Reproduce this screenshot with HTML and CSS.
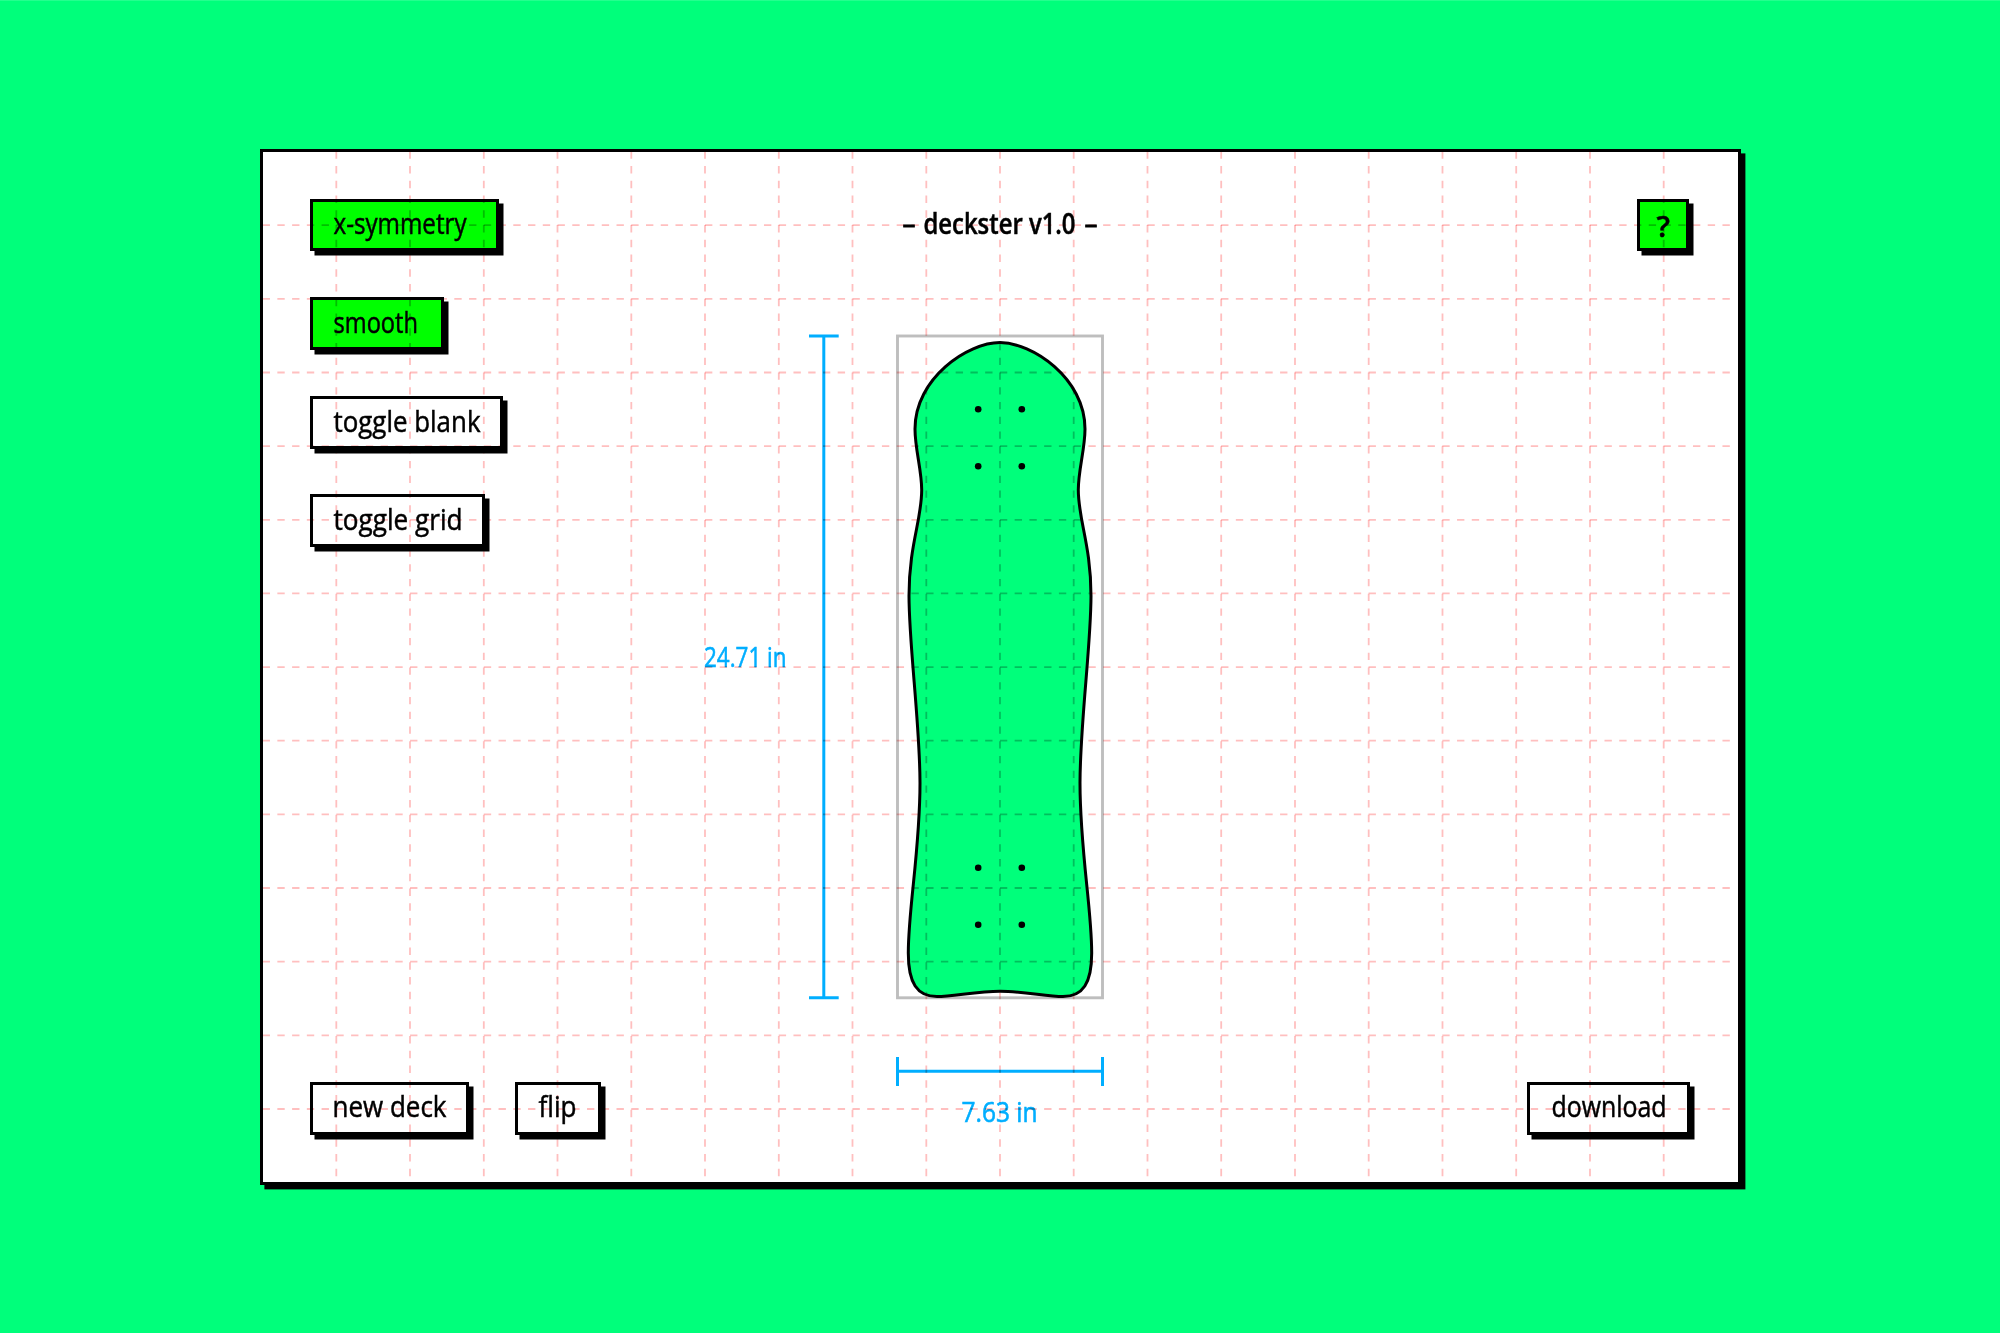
FILE: index.html
```html
<!DOCTYPE html>
<html lang="en">
<head>
<meta charset="utf-8">
<title>deckster</title>
<link rel="stylesheet" href="styles.css">
</head>
<body>
<main class="panel">
  <svg class="stage" viewBox="263 152 1475 1030">
    <rect class="bounds" x="897.5" y="336" width="205" height="661.8"/>
    <path class="deck" d="M1000 342.6 C968 342.6 915 378 915 429 C915 449 921.7 470 921.7 490 C921.7 520 909 545 909 596 C909 645 920 725 920 783 C920 850 908.3 908 908.3 953 C908.3 983 917 996.5 937 996.5 C953 996.5 977 991.2 1000 991.2 C1023 991.2 1047 996.5 1063 996.5 C1083 996.5 1091.7 983 1091.7 953 C1091.7 908 1080 850 1080 783 C1080 725 1091 645 1091 596 C1091 545 1078.3 520 1078.3 490 C1078.3 470 1085 449 1085 429 C1085 378 1032 342.6 1000 342.6 Z"/>
    <g class="bolts">
      <circle cx="978.2" cy="409.2" r="3.3"/><circle cx="1021.8" cy="409.2" r="3.3"/>
      <circle cx="978.2" cy="466.2" r="3.3"/><circle cx="1021.8" cy="466.2" r="3.3"/>
      <circle cx="978.2" cy="867.8" r="3.3"/><circle cx="1021.8" cy="867.8" r="3.3"/>
      <circle cx="978.2" cy="924.7" r="3.3"/><circle cx="1021.8" cy="924.7" r="3.3"/>
    </g>
    <path class="ruler" d="M809 336H838.7M823.8 336V997.8M809 997.8H838.7M897.5 1057V1086M897.5 1071.2H1102.5M1102.5 1057V1086"/>
    <text class="measure" x="704" y="666.5" textLength="82.5" lengthAdjust="spacingAndGlyphs">24.71 in</text>
    <text class="measure" x="961.5" y="1122.3" textLength="76" lengthAdjust="spacingAndGlyphs">7.63 in</text>
  </svg>

  <header class="top">
    <button class="btn on w-sym"><svg class="label"><text x="20.5" y="32" textLength="133" lengthAdjust="spacingAndGlyphs">x-symmetry</text></svg></button>
    <h1 class="title"><svg class="label">
      <text class="dash" x="-0.5" y="31.5" textLength="13" lengthAdjust="spacingAndGlyphs">–</text>
      <text class="bold" x="20.5" y="31.5" textLength="152" lengthAdjust="spacingAndGlyphs">deckster v1.0</text>
      <text class="dash" x="181.5" y="31.5" textLength="13" lengthAdjust="spacingAndGlyphs">–</text>
    </svg></h1>
    <button class="btn on w-help"><svg class="label"><text class="bold" x="16.5" y="35" textLength="13.5" lengthAdjust="spacingAndGlyphs">?</text></svg></button>
  </header>

  <nav class="tools">
    <button class="btn on w-smooth"><svg class="label"><text x="20.5" y="32.6" textLength="84.5" lengthAdjust="spacingAndGlyphs">smooth</text></svg></button>
    <button class="btn w-blank"><svg class="label"><text x="20.5" y="32.6" textLength="147" lengthAdjust="spacingAndGlyphs">toggle blank</text></svg></button>
    <button class="btn w-grid"><svg class="label"><text x="20.5" y="32.8" textLength="129" lengthAdjust="spacingAndGlyphs">toggle grid</text></svg></button>
  </nav>

  <footer class="bottom">
    <button class="btn w-new"><svg class="label"><text x="19.5" y="32.3" textLength="114" lengthAdjust="spacingAndGlyphs">new deck</text></svg></button>
    <button class="btn w-flip"><svg class="label"><text x="20.5" y="32.3" textLength="38" lengthAdjust="spacingAndGlyphs">flip</text></svg></button>
    <button class="btn w-down"><svg class="label"><text x="21.5" y="32.3" textLength="115" lengthAdjust="spacingAndGlyphs">download</text></svg></button>
  </footer>

  <svg class="grid" viewBox="263 152 1475 1030">
    <path d="M336.3 151.3V1182M410 151.3V1182M483.8 151.3V1182M557.5 151.3V1182M631.3 151.3V1182M705 151.3V1182M778.8 151.3V1182M852.5 151.3V1182M926.3 151.3V1182M1000 151.3V1182M1073.7 151.3V1182M1147.5 151.3V1182M1221.2 151.3V1182M1295 151.3V1182M1368.7 151.3V1182M1442.5 151.3V1182M1516.2 151.3V1182M1590 151.3V1182M1663.7 151.3V1182"/>
    <path d="M262.6 225.1H1737M262.6 298.8H1737M262.6 372.5H1737M262.6 446.1H1737M262.6 519.8H1737M262.6 593.4H1737M262.6 667.1H1737M262.6 740.7H1737M262.6 814.4H1737M262.6 888H1737M262.6 961.7H1737M262.6 1035.3H1737M262.6 1109H1737"/>
  </svg>
</main>
</body>
</html>
```
FILE: styles.css
```css
* {
  box-sizing: border-box;
}

body {
  margin: 0;
  height: 1333px;
  padding: 148px 0 0 260px;
  border-top: 1px solid #24ff8e;
  background: #00ff7b;
  font-family: "Open Sans", "Noto Sans", sans-serif;
  overflow: hidden;
}

.panel {
  position: relative;
  display: flex;
  flex-direction: column;
  gap: 45.9px;
  width: 1481px;
  height: 1036px;
  padding: 46.7px 48px 47.3px 47px;
  border: 3px solid #000;
  background: #fff;
  box-shadow: 4.4px 4.4px 0 #000;
}

.stage,
.grid {
  position: absolute;
  inset: 0;
  width: 1475px;
  height: 1030px;
}

.grid {
  pointer-events: none;
  mix-blend-mode: multiply;
}

.grid path {
  fill: none;
  stroke: rgba(255, 0, 0, 0.25);
  stroke-width: 1.8;
  stroke-dasharray: 7.373;
}

.bounds {
  fill: none;
  stroke: #bebebe;
  stroke-width: 2.9;
}

.deck {
  fill: #00ff7b;
  stroke: #000;
  stroke-width: 3;
}

.ruler {
  fill: none;
  stroke: #00aeff;
  stroke-width: 3;
}

.measure {
  fill: #00aeff;
  stroke: #00aeff;
  stroke-width: 0.6;
  font-size: 28px;
}

.top {
  position: relative;
  display: flex;
  justify-content: space-between;
  height: 52.7px;
}

.title {
  flex: none;
  width: 194px;
  height: 52.7px;
  margin: 0 145px 0 8px;
  padding-top: 3px;
}

.tools {
  position: relative;
  display: flex;
  flex-direction: column;
  gap: 45.9px;
}

.bottom {
  position: relative;
  display: flex;
  gap: 46px;
  margin-top: auto;
}

.btn {
  height: 52.7px;
  padding: 0;
  border: 3px solid #000;
  background: #fff;
  box-shadow: 4.5px 4.5px 0 #000;
  font-family: inherit;
}

.on {
  background: #0f0;
}

.label {
  display: block;
  width: 100%;
  height: 100%;
  overflow: visible;
  fill: #000;
  stroke: #000;
  stroke-width: 0.5;
  font-size: 29px;
  font-weight: 400;
}

.bold {
  font-weight: 600;
}

.dash {
  stroke-width: 0.8;
}

.w-sym { width: 189px; }
.w-help { width: 52px; margin-right: 1px; }
.w-smooth { width: 134px; }
.w-blank { width: 193px; }
.w-grid { width: 175px; }
.w-new { width: 159px; }
.w-flip { width: 86px; }
.w-down { width: 163px; margin-left: auto; }
```
